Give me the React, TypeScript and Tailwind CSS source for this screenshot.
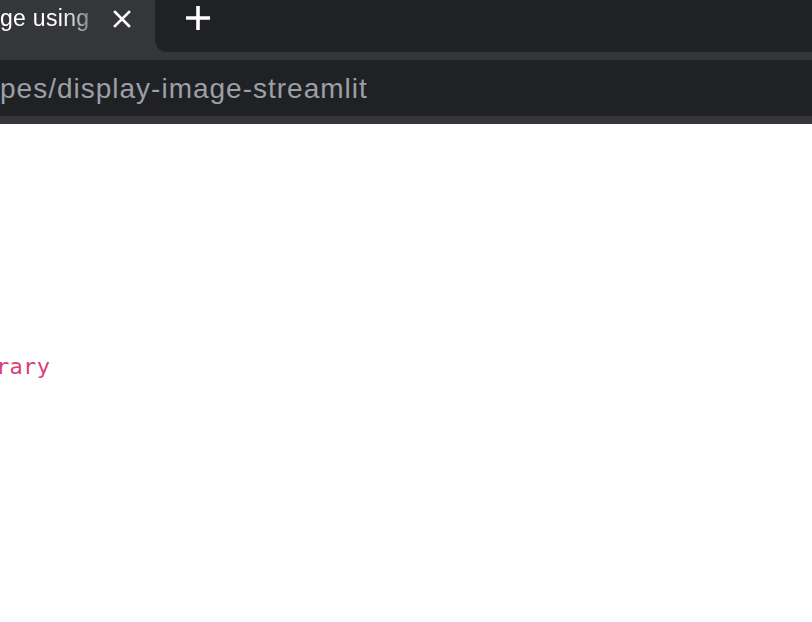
export default function App() {
  return (
    <div className="w-[812px] h-[622px] overflow-hidden bg-white flex flex-col">
      {/* tab strip */}
      <div className="h-[52px] shrink-0 flex bg-[#35363a]">
        <div className="w-[155px] shrink-0 flex items-start">
          <span
            className="mt-[2px] text-[23px] leading-[32px] tracking-[0.3px] text-white whitespace-nowrap [mask-image:linear-gradient(to_right,black_62px,rgba(0,0,0,0.35)_92px)]"
            style={{ fontFamily: '"Liberation Sans", Arial, sans-serif' }}
          >
            ge using
          </span>
          <svg className="ml-[24px] mt-[10px]" width="18" height="18" viewBox="0 0 18 18">
            <path d="M2 2 L16 16 M16 2 L2 16" stroke="white" strokeWidth="2.6" strokeLinecap="square" />
          </svg>
        </div>
        <div className="flex-1 bg-[#202124] rounded-bl-[12px] flex items-start">
          <svg className="ml-[31px] mt-[6px]" width="24" height="24" viewBox="0 0 24 24">
            <path d="M12 0 V24 M0 12 H24" stroke="white" strokeWidth="3.6" />
          </svg>
        </div>
      </div>
      <div className="h-[8px] shrink-0 bg-[#35363a]" />
      {/* address bar */}
      <div className="h-[56px] shrink-0 bg-[#202124] flex items-center">
        <span
          className="pt-[2px] text-[28px] leading-none tracking-[1px] text-[#9aa0a6] whitespace-nowrap"
          style={{ fontFamily: '"Liberation Sans", Arial, sans-serif' }}
        >
          pes/display-image-streamlit
        </span>
      </div>
      <div className="h-[8px] shrink-0 bg-[#35363a]" />
      {/* page */}
      <div className="flex-1 pt-[228px]">
        <code
          className="block -ml-[4px] text-[22px] leading-[30px] tracking-[0.3px] text-[#d9407a]"
          style={{ fontFamily: '"DejaVu Sans Mono", monospace' }}
        >
          rary
        </code>
      </div>
    </div>
  );
}
